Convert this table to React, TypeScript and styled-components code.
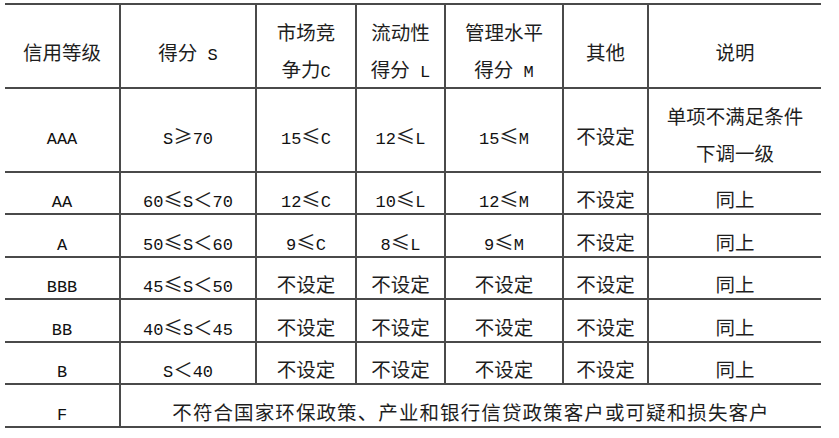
import React from 'react';
import styled, { createGlobalStyle } from 'styled-components';

const Global = createGlobalStyle`
  html, body { margin: 0; padding: 0; background: #ffffff; }
  body { font-family: "Noto Sans CJK SC", sans-serif; }
`;

const Page = styled.div`
  padding: 3px 0 0 5px;
`;

const Table = styled.table`
  border-collapse: collapse;
  table-layout: fixed;
  width: 816px;
  font-family: "Noto Sans CJK SC", sans-serif;
  font-size: 19.5px;
  color: #1e1e1e;
`;

const Row = styled.tr<{ $h: number }>`
  height: ${(p) => p.$h}px;
`;

const Cell = styled.td<{ $lh?: number; $pt?: number; $ls?: number }>`
  border: 2px solid #4a4a4a;
  text-align: center;
  vertical-align: middle;
  padding: ${(p) => p.$pt ?? 11}px 0 0 0;
  line-height: ${(p) => p.$lh ?? 29}px;
  letter-spacing: ${(p) => p.$ls ?? 0}px;
  white-space: nowrap;
  overflow: hidden;
  &:first-child { border-left: none; }
  &:last-child { border-right: none; }
`;

const Lat = styled.span`
  font-family: "Liberation Mono", monospace;
  font-size: 17px;
  line-height: 1;
  color: #111;
`;

const cols = [115, 136, 100, 89, 118, 85, 173];

function txt(s: string) {
  const parts = s.split(/([A-Za-z0-9 ]+)/).filter((x) => x !== '');
  return parts.map((p, i) =>
    /^[A-Za-z0-9 ]+$/.test(p) ? <Lat key={i}>{p}</Lat> : <React.Fragment key={i}>{p}</React.Fragment>
  );
}

function multi(lines: string[]) {
  return lines.map((l, i) => (
    <React.Fragment key={i}>
      {i > 0 && <br />}
      {txt(l)}
    </React.Fragment>
  ));
}

const header: string[][] = [
  ['信用等级'],
  ['得分 S'],
  ['市场竞', '争力C'],
  ['流动性', '得分 L'],
  ['管理水平', '得分 M'],
  ['其他'],
  ['说明'],
];

const rows: { h: number; cells: string[][] }[] = [
  { h: 84, cells: [['AAA'], ['S≥70'], ['15≤C'], ['12≤L'], ['15≤M'], ['不设定'], ['单项不满足条件', '下调一级']] },
  { h: 42, cells: [['AA'], ['60≤S＜70'], ['12≤C'], ['10≤L'], ['12≤M'], ['不设定'], ['同上']] },
  { h: 43, cells: [['A'], ['50≤S＜60'], ['9≤C'], ['8≤L'], ['9≤M'], ['不设定'], ['同上']] },
  { h: 42, cells: [['BBB'], ['45≤S＜50'], ['不设定'], ['不设定'], ['不设定'], ['不设定'], ['同上']] },
  { h: 43, cells: [['BB'], ['40≤S＜45'], ['不设定'], ['不设定'], ['不设定'], ['不设定'], ['同上']] },
  { h: 42, cells: [['B'], ['S＜40'], ['不设定'], ['不设定'], ['不设定'], ['不设定'], ['同上']] },
];

function renderCell(lines: string[], key: number) {
  if (lines.length > 1) {
    return (
      <Cell key={key} $lh={37} $pt={8}>
        {multi(lines)}
      </Cell>
    );
  }
  return <Cell key={key}>{txt(lines[0])}</Cell>;
}

export default function App() {
  return (
    <>
      <Global />
      <Page>
        <Table>
          <colgroup>
            {cols.map((w, i) => (
              <col key={i} style={{ width: w }} />
            ))}
          </colgroup>
          <tbody>
            <Row $h={84}>{header.map((c, i) => renderCell(c, i))}</Row>
            {rows.map((r, ri) => (
              <Row key={ri} $h={r.h}>
                {r.cells.map((c, i) => renderCell(c, i))}
              </Row>
            ))}
            <Row $h={43}>
              <Cell>{txt('F')}</Cell>
              <Cell colSpan={6} $ls={1.1}>
                不符合国家环保政策、产业和银行信贷政策客户或可疑和损失客户
              </Cell>
            </Row>
          </tbody>
        </Table>
      </Page>
    </>
  );
}
